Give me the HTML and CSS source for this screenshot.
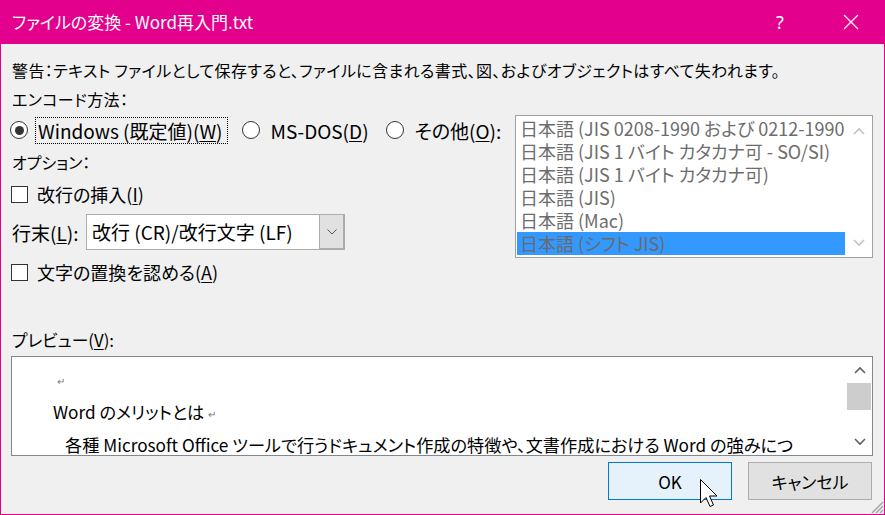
FILE: index.html
```html
<!DOCTYPE html>
<html lang="ja">
<head>
<meta charset="utf-8">
<title>ファイルの変換</title>
<link rel="stylesheet" href="styles.css">
</head>
<body>
<div class="window">
  <div class="titlebar">
    <span class="title">ファイルの変換 - Word再入門.txt</span>
    <div class="title-buttons">
      <span class="tb-btn help">?</span>
      <span class="tb-btn close">
        <svg width="16" height="16" viewBox="0 0 16 16"><path d="M1 1 L15 15 M15 1 L1 15" stroke="#fff" stroke-width="1.2" fill="none"/></svg>
      </span>
    </div>
  </div>
  <div class="content">
    <div class="line warning">警告：テキスト ファイルとして保存すると、ファイルに含まれる書式、図、およびオブジェクトはすべて失われます。</div>
    <div class="line encode">エンコード方法：</div>
    <div class="main">
      <div class="left">
        <div class="radios">
          <label class="radio"><span class="circle checked"></span><span class="radio-text focus">Windows (既定値)(<u>W</u>)</span></label>
          <label class="radio"><span class="circle"></span><span class="radio-text">MS-DOS(<u>D</u>)</span></label>
          <label class="radio"><span class="circle"></span><span class="radio-text">その他(<u>O</u>):</span></label>
        </div>
        <div class="line options">オプション：</div>
        <label class="check-row first"><span class="box"></span><span>改行の挿入(<u>I</u>)</span></label>
        <div class="eol-row">
          <span class="eol-label">行末(<u>L</u>):</span>
          <div class="select">
            <span class="select-value">改行 (CR)/改行文字 (LF)</span>
            <span class="select-btn"><svg width="10" height="6" viewBox="0 0 10 6"><path d="M0.5 0.5 L5 5 L9.5 0.5" stroke="#555" stroke-width="1" fill="none"/></svg></span>
          </div>
        </div>
        <label class="check-row second"><span class="box"></span><span>文字の置換を認める(<u>A</u>)</span></label>
      </div>
      <div class="listbox">
        <ul class="items">
          <li>日本語 (JIS 0208-1990 および 0212-1990)</li>
          <li>日本語 (JIS 1 バイト カタカナ可 - SO/SI)</li>
          <li>日本語 (JIS 1 バイト カタカナ可)</li>
          <li>日本語 (JIS)</li>
          <li>日本語 (Mac)</li>
          <li class="selected">日本語 (シフト JIS)</li>
        </ul>
        <div class="scrollbar disabled">
          <svg width="12" height="8" viewBox="0 0 12 8"><path d="M1 7 L6 2 L11 7" stroke="#c2c2c2" stroke-width="1.6" fill="none"/></svg>
          <svg width="12" height="8" viewBox="0 0 12 8"><path d="M1 1 L6 6 L11 1" stroke="#c2c2c2" stroke-width="1.6" fill="none"/></svg>
        </div>
      </div>
    </div>
    <div class="line preview-label">プレビュー(<u>V</u>):</div>
    <div class="preview">
      <div class="preview-text">
        <div class="pline p1"><span class="ret">↵</span></div>
        <div class="pline p2">Word のメリットとは <span class="ret">↵</span></div>
        <div class="pline p3">各種 Microsoft Office ツールで行うドキュメント作成の特徴や、文書作成における Word の強みにつ</div>
      </div>
      <div class="scrollbar vscroll">
        <span class="arrow up"><svg width="12" height="8" viewBox="0 0 12 8"><path d="M1 7 L6 2 L11 7" stroke="#606060" stroke-width="1.6" fill="none"/></svg></span>
        <span class="thumb"></span>
        <span class="track"></span>
        <span class="arrow down"><svg width="12" height="8" viewBox="0 0 12 8"><path d="M1 1 L6 6 L11 1" stroke="#606060" stroke-width="1.6" fill="none"/></svg></span>
      </div>
    </div>
    <div class="buttons">
      <button class="btn ok">OK</button>
      <button class="btn cancel">キャンセル</button>
    </div>
  </div>
  <svg class="cursor" width="20" height="30" viewBox="0 0 20 30"><path d="M0.5 0.5 L0.5 24 L6 18.5 L10 27.5 L13.5 26 L9.5 17 L17 17 Z" fill="#fff" stroke="#000" stroke-width="1" stroke-linejoin="miter"/></svg>
  <svg class="grip" width="14" height="14" viewBox="0 0 14 14"><path d="M13 2 L2 13 M13 6 L6 13 M13 10 L10 13" stroke="#a8a8a8" stroke-width="1.5" fill="none"/></svg>
</div>
</body>
</html>
```
FILE: styles.css
```css
* { box-sizing: border-box; margin: 0; padding: 0; }
html, body { width: 885px; height: 515px; overflow: hidden; }
body {
  font-family: "Noto Sans CJK JP", "Noto Sans", sans-serif;
  font-size: 16px;
  font-feature-settings: "palt";
  color: #000;
  background: #f0f0f0;
}
u { text-decoration: underline; text-underline-offset: 2px; }

.window {
  position: relative;
  width: 885px;
  height: 515px;
  background: #f0f0f0;
  border: 1px solid #e3008c;
  border-top: none;
  display: flex;
  flex-direction: column;
}

.titlebar {
  height: 44px;
  flex: 0 0 44px;
  background: #e3008c;
  color: #fff;
  display: flex;
  align-items: center;
  justify-content: space-between;
  padding: 0 10px 0 11px;
}
.title { font-size: 17px; line-height: 20px; }
.title-buttons { display: flex; align-items: center; height: 100%; gap: 25px; }
.tb-btn { width: 46px; height: 44px; display: flex; align-items: center; justify-content: center; }
.help { font-family: "Noto Sans", sans-serif; font-size: 18px; }

.content {
  flex: 1;
  padding: 0 10px 0 10px;
  display: flex;
  flex-direction: column;
}
.line { height: 20px; line-height: 20px; padding-left: 1px; white-space: nowrap; }
.warning { margin-top: 16px; letter-spacing: 0.4px; }
.encode { margin-top: 9px; letter-spacing: 0.4px; }

.main {
  margin-top: 6px;
  height: 167px;
  display: flex;
  justify-content: space-between;
  align-items: flex-start;
}
.left { display: flex; flex-direction: column; flex-shrink: 0; }

.radios { height: 30px; display: flex; align-items: center; }
.radio { display: flex; align-items: center; flex-shrink: 0; }
.radio:nth-child(1) { margin-right: 16px; }
.radio:nth-child(2) { margin-right: 14px; }
.circle {
  flex: 0 0 18px;
  width: 18px; height: 18px;
  border: 1.5px solid #333;
  border-radius: 50%;
  background: #fff;
  display: flex; align-items: center; justify-content: center;
  margin-left: -1px;
  margin-right: 9px;
}
.circle.checked::after {
  content: "";
  width: 9px; height: 9px;
  border-radius: 50%;
  background: #333;
}
.radio-text { font-size: 19px; line-height: 23px; padding: 1px 4px 1px 2px; white-space: nowrap; }
.radio-text.focus { outline: 1px dotted #000; outline-offset: 0; margin-left: -1px; }

.options { margin-top: 7px; }

.check-row { display: flex; align-items: center; height: 20px; line-height: 20px; font-size: 18px; white-space: nowrap; }
.check-row.first { margin-top: 12px; }
.check-row.second { margin-top: 12px; }
.box {
  flex: 0 0 17px;
  width: 17px; height: 17px;
  border: 1px solid #333;
  background: #fff;
  margin-right: 9px;
}

.eol-row { margin-top: 10px; height: 36px; display: flex; align-items: center; }
.eol-label { font-size: 19px; padding-left: 1px; width: 75px; white-space: nowrap; }
.select {
  width: 259px; height: 36px;
  border: 1px solid #adadad;
  background: #fff;
  display: flex;
}
.select-value { flex: 1; font-size: 19px; line-height: 34px; padding-left: 5px; white-space: nowrap; }
.select-btn {
  width: 25px;
  background: #e1e1e1;
  border-left: 1px solid #adadad;
  border-right: 1px solid #adadad;
  border-bottom: 1px solid #adadad;
  display: flex; align-items: center; justify-content: center;
}

.listbox {
  width: 358px; height: 143px;
  margin-right: 1px;
  border: 1px solid #a0a0a0;
  background: #fff;
  display: flex;
}
.items { list-style: none; flex: 1; padding: 1px 0 0 1px; overflow: hidden; }
.items li {
  height: 23px; line-height: 23px;
  padding-left: 3px;
  font-size: 18px;
  color: #6d6d6d;
  white-space: nowrap;
  overflow: hidden;
}
.items li.selected { background: #3399ff; color: #6a6a6a; }
.scrollbar.disabled {
  width: 27px;
  display: flex; flex-direction: column; align-items: center; justify-content: space-between;
  padding: 11px 0 10px;
}

.preview-label { margin-top: 48px; font-size: 16.8px; }
.preview {
  margin-top: 6px;
  margin-right: 1px;
  height: 100px;
  border: 1px solid #828790;
  background: #fff;
  display: flex;
}
.preview-text { flex: 1; overflow: hidden; padding: 5px 0 0 41px; }
.pline { height: 33px; line-height: 33px; font-size: 17.2px; white-space: nowrap; }
.p1 { padding-left: 4px; }
.p3 { padding-left: 12px; }
.ret { font-size: 10px; color: #777; vertical-align: 1px; }

.vscroll {
  width: 25px;
  display: flex; flex-direction: column;
}
.vscroll .arrow { height: 26px; display: flex; align-items: center; justify-content: center; }
.vscroll .thumb { height: 27px; background: #cdcdcd; margin: 0 1px 0 0; }
.vscroll .track { flex: 1; }

.buttons {
  margin-top: 6px;
  margin-right: 2px;
  display: flex;
  justify-content: flex-end;
  gap: 16px;
}
.btn {
  width: 124px; height: 38px;
  font-family: inherit;
  font-size: 17px;
  color: #000;
  font-feature-settings: "palt";
}
.btn.ok { background: #e5f1fb; border: 1px solid #0078d7; }
.btn.cancel { background: #e1e1e1; border: 1px solid #adadad; }

.cursor { position: absolute; left: 699px; top: 479px; }
.grip { position: absolute; right: 0; bottom: 0; }
```
